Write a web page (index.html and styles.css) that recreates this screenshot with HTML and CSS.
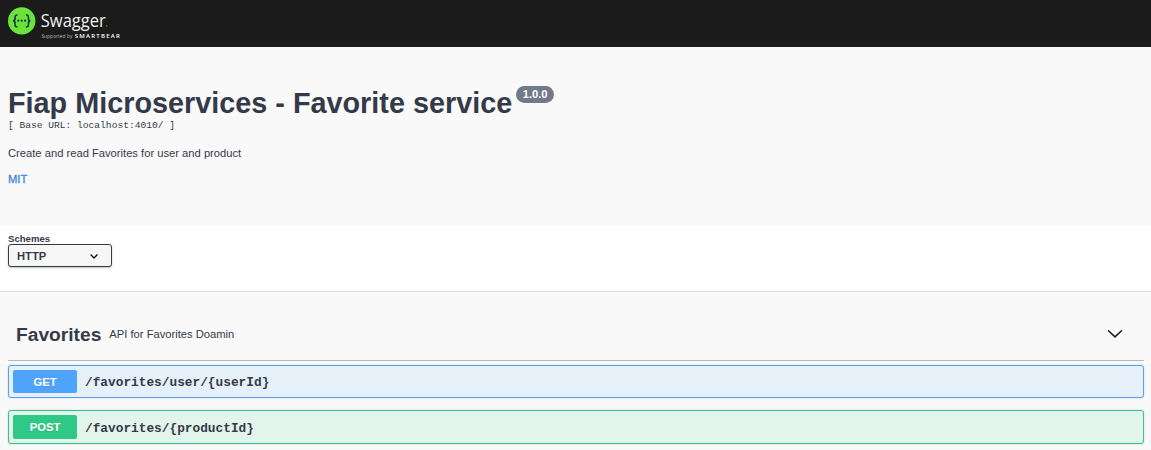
FILE: index.html
```html
<!DOCTYPE html>
<html lang="en">
<head>
<meta charset="utf-8">
<title>Swagger UI</title>
<link rel="stylesheet" href="styles.css">
</head>
<body>
<header class="topbar">
  <svg class="logo" width="116" height="36" viewBox="0 0 116 36" role="img" aria-label="Swagger">
    <circle cx="13.7" cy="13.9" r="13.7" fill="#6be43a"/>
    <g fill="none" stroke="#173647" stroke-width="1.6">
      <path d="M9.6 8C7.3 7.9 7 8.8 7.1 11C7.2 13 6.8 13.7 5.2 13.9C6.8 14.1 7.2 14.8 7.1 16.8C7 19 7.3 19.9 9.6 19.8"/>
      <path d="M17.9 8C20.2 7.9 20.5 8.8 20.4 11C20.3 13 20.7 13.7 22.3 13.9C20.7 14.1 20.3 14.8 20.4 16.8C20.5 19 20.2 19.9 17.9 19.8"/>
    </g>
    <g fill="#173647"><circle cx="10.3" cy="13.7" r="1.1"/><circle cx="13.7" cy="13.7" r="1.1"/><circle cx="17.1" cy="13.7" r="1.1"/></g>
    <text class="logo-name" x="32.8" y="19.5" textLength="65" lengthAdjust="spacingAndGlyphs">Swagger</text>
    <circle cx="98.8" cy="18.8" r=".6" fill="#aaa"/>
    <text class="logo-by" x="33.4" y="30.7" textLength="31" lengthAdjust="spacingAndGlyphs">Supported by</text>
    <text class="logo-brand" x="66.7" y="31" textLength="45.2">SMARTBEAR</text>
  </svg>
</header>
<section class="info">
  <h1 class="title">Fiap Microservices - Favorite service<span class="version">1.0.0</span></h1>
  <pre class="base-url">[ Base URL: localhost:4010/ ]</pre>
  <p class="description">Create and read Favorites for user and product</p>
  <a class="license">MIT</a>
</section>
<section class="schemes">
  <div class="schemes-label">Schemes</div>
  <div class="select">HTTP
    <svg class="select-arrow" width="8" height="5" viewBox="0 0 8 5"><path d="M.6 .6L4 3.9L7.4 .6" fill="none" stroke="#111" stroke-width="1.4"/></svg>
  </div>
</section>
<main class="operations">
  <div class="tag">
    <h2 class="tag-name">Favorites</h2>
    <span class="tag-text">API for Favorites Doamin</span>
    <svg class="tag-arrow" width="16" height="10" viewBox="0 0 16 10"><path d="M1.5 1.7L8 7.9L14.5 1.7" fill="none" stroke="#1b1b1b" stroke-width="1.5" stroke-linecap="round"/></svg>
  </div>
  <div class="op op-get"><span class="method">GET</span><span class="path">/favorites/user/{userId}</span></div>
  <div class="op op-post"><span class="method">POST</span><span class="path">/favorites/{productId}</span></div>
</main>
</body>
</html>
```
FILE: styles.css
```css
* { box-sizing: border-box; }
body {
  margin: 0;
  height: 450px;
  overflow: hidden;
  background: #f9f9f9;
  color: #343a49;
  font-family: "Liberation Sans", Arial, sans-serif;
}
.topbar { height: 47px; padding: 7px 8px; background: #1b1b1b; }
.logo { display: block; }
.logo-name { font: 400 17.5px "Open Sans", sans-serif; fill: #f0f0f0; }
.logo-by { font: 5.3px "Open Sans", sans-serif; fill: #b4b4b4; }
.logo-brand { font: 600 6px "Open Sans", sans-serif; fill: #fff; }
.info { height: 179px; padding: 40px 8px 0; }
.title {
  display: flex;
  align-items: flex-start;
  margin: 0;
  font-size: 28.8px;
  line-height: 33px;
}
.version {
  height: 17px;
  margin: -1px 0 0 4px;
  padding: 0 6.5px;
  border-radius: 9px;
  background: #727988;
  color: #fff;
  font-size: 11.2px;
  line-height: 17px;
}
.base-url { margin: 0; font: 9.6px/11px "Liberation Mono", monospace; }
.description { margin: 16px 0 0; font-size: 11.2px; line-height: 13px; }
.license {
  display: block;
  margin-top: 13px;
  color: #3f8ae0;
  font-size: 11.2px;
  line-height: 13px;
  -webkit-text-stroke: .35px #3f8ae0;
}
.schemes {
  height: 66px;
  padding: 7px 8px 0;
  background: #fff;
  border-bottom: 1px solid #dcdcdc;
}
.schemes-label { font-size: 9.6px; font-weight: 700; line-height: 11px; }
.select {
  display: flex;
  align-items: center;
  justify-content: space-between;
  width: 104px;
  height: 23px;
  padding: 0 13px 0 8px;
  border: 1px solid #343a49;
  border-radius: 3px;
  background: #f6f6f6;
  box-shadow: 0 1px 2px rgba(0, 0, 0, .25);
  font-size: 11.2px;
  font-weight: 700;
}
.select-arrow { margin-top: 1px; }
.operations { padding: 16px 7px 0 8px; }
.tag {
  display: flex;
  align-items: center;
  height: 53px;
  padding: 0 21px 0 8px;
  border-bottom: 1px solid #b8b9be;
}
.tag-name { margin: 2px 8px 0 0; font-size: 19.2px; line-height: 22px; }
.tag-text { font-size: 11.2px; }
.tag-arrow { margin: 0 0 1px auto; }
.op {
  display: flex;
  align-items: center;
  height: 33px;
  padding: 0 4px;
  border: 1px solid;
  border-radius: 3px;
  box-shadow: 0 0 2px rgba(0, 0, 0, .19);
}
.op-get { margin-top: 4px; border-color: #50a3fb; background: #e6f0f9; }
.op-post { height: 34px; margin-top: 12px; border-color: #2fc886; background: #e3f4ec; }
.method {
  width: 64px;
  height: 23px;
  border-radius: 2px;
  color: #fff;
  font-size: 11.2px;
  font-weight: 700;
  line-height: 24px;
  text-align: center;
  text-shadow: 0 1px 0 rgba(0, 0, 0, .1);
}
.op-get .method { background: #50a3fb; }
.op-post .method { height: 24px; background: #2fc886; }
.path { margin: 2px 0 0 8px; font: 700 12.8px "Liberation Mono", monospace; }
```
